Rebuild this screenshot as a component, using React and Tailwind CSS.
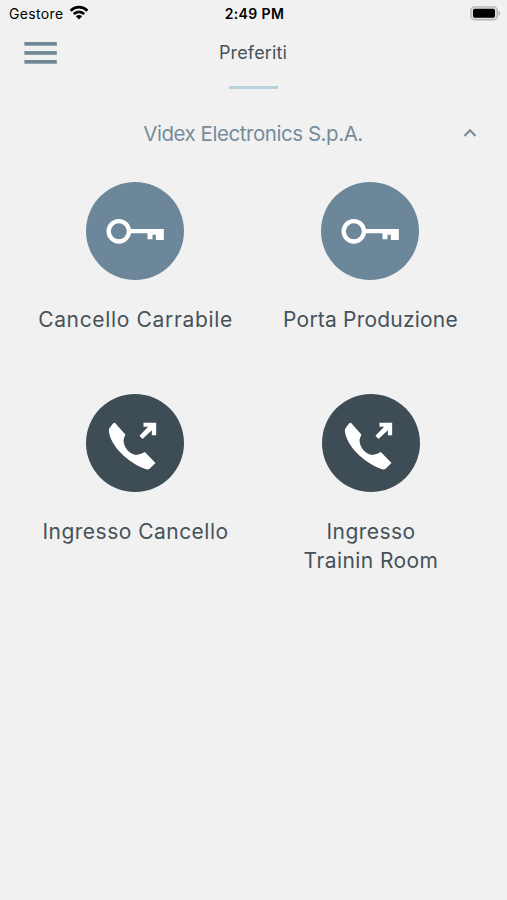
// src/App.jsx
// Favourites screen: status bar, header, system section and shortcut grid

import { useState } from "react";

const shortcuts = [
  { id: 1, type: "gate", label: "Cancello Carrabile", circle: "mr-px", text: "tracking-[0.66px]" },
  { id: 2, type: "gate", label: "Porta Produzione", circle: "mr-px", text: "tracking-[0.2px]" },
  { id: 3, type: "call", label: "Ingresso Cancello", circle: "mr-px", text: "tracking-[0.48px]" },
  { id: 4, type: "call", label: "Ingresso\nTrainin Room", circle: "", text: "pl-px tracking-[0.42px]" },
];

// ─── Icons ────────────────────────────────────────────────────────────────────
function WifiIcon() {
  return (
    <svg className="mb-[2px]" width="20" height="15" viewBox="0 0 20 15" fill="none" stroke="#000" strokeWidth="2.7">
      <path d="M1.6 5.7 C6.3 1 13.7 1 18.4 5.7" />
      <path d="M4.8 9 C7.8 6.1 12.2 6.1 15.2 9" />
      <path d="M10 14.4 L6.9 11.3 C8.7 9.7 11.3 9.7 13.1 11.3 Z" fill="#000" stroke="none" />
    </svg>
  );
}

function BatteryIcon() {
  return (
    <svg width="31" height="15" viewBox="0 0 31 15">
      <rect x="0.9" y="0.9" width="26.4" height="12.8" rx="3.8" fill="#dedede" stroke="#b5b5b5" strokeWidth="1.4" />
      <rect x="3" y="2.8" width="22" height="9" rx="1.8" fill="#000" />
      <path d="M28.4 5 C30.8 5.8 30.8 8.8 28.4 9.6 Z" fill="#b5b5b5" />
    </svg>
  );
}

function MenuIcon() {
  return (
    <svg width="33" height="22" viewBox="0 0 33 22" fill="#708796">
      <rect x="0.4" y="0" width="32.4" height="3.7" />
      <rect x="0.4" y="9.1" width="32.4" height="3.7" />
      <rect x="0.4" y="18" width="32.4" height="3.7" />
    </svg>
  );
}

function KeyIcon() {
  return (
    <svg className="size-full" viewBox="18.5 20 294 294" fill="#fff">
      <circle cx="117" cy="168" r="30.5" fill="none" stroke="#fff" strokeWidth="13" />
      <path d="M150 161 H252 V194 H228 V178 H218 V192 H203 V174 H150 Z" />
    </svg>
  );
}

function CallIcon() {
  return (
    <svg className="size-full" viewBox="18.5 19 294 294" fill="#fff">
      <path d="M99 108 Q104 103 108 108 L137 141 Q132 148 131 158 C132 180 148 199 168 202 Q182 201 195 193 L227 226 L209 243 Q204 247 197 244 C145 226 90 174 87 128 Q87 124 90 120 Z" />
      <path d="M191 105 H229 V143 H216 V128 L188 154 L179 144 L205 117 H191 Z" />
    </svg>
  );
}

// ─── Shortcut ─────────────────────────────────────────────────────────────────
function Shortcut({ item }) {
  const isGate = item.type === "gate";
  return (
    <button className="flex flex-col items-center">
      <span className={`size-[98px] rounded-full ${item.circle} ${isGate ? "bg-[#6b8799]" : "bg-[#3e4c56]"}`}>
        {isGate ? <KeyIcon /> : <CallIcon />}
      </span>
      <span className={`mt-[25px] whitespace-pre text-[21px] leading-[29px] ${item.text}`}>
        {item.label}
      </span>
    </button>
  );
}

// ─── Page ─────────────────────────────────────────────────────────────────────
export default function App() {
  const [open, setOpen] = useState(true);

  return (
    <div className="min-h-screen bg-[#f1f1f1] font-['Inter',sans-serif] text-[#46525a]">
      {/* Status bar */}
      <div className="grid h-[27px] grid-cols-[1fr_auto_1fr] items-center pl-[8px] pr-[6px] text-sm text-black">
        <div className="flex items-center gap-[5px]">
          <span className="pl-px tracking-[0.35px]">Gestore</span>
          <WifiIcon />
        </div>
        <span className="text-[14px] font-semibold tracking-[0.4px]">2:49 PM</span>
        <div className="flex justify-end">
          <BatteryIcon />
        </div>
      </div>

      {/* Header */}
      <header className="grid h-[51px] grid-cols-[1fr_auto_1fr] items-center pl-6 pr-6">
        <button className="flex" aria-label="Menu">
          <MenuIcon />
        </button>
        <h1 className="pr-px text-[18px] tracking-[0.15px]">Preferiti</h1>
      </header>
      <div className="mx-auto mt-2 h-[3px] w-[49px] bg-[#bbd0dd]" />

      {/* Section */}
      <button
        onClick={() => setOpen(!open)}
        className="mt-[29px] grid h-8 w-full grid-cols-[1fr_auto_1fr] items-center pl-[29px] pr-[30px] text-[#768c9b]"
      >
        <span />
        <span className="text-[20.5px] tracking-[-0.45px]">Videx Electronics S.p.A.</span>
        <svg
          className={`mb-[2px] justify-self-end ${open ? "" : "rotate-180"}`}
          width="14" height="10" viewBox="0 0 14 10"
          fill="none" stroke="currentColor" strokeWidth="2.2"
        >
          <path d="M1.5 8 L7 2.3 L12.5 8" />
        </svg>
      </button>

      {open && (
        <div className="mt-[32px] grid grid-cols-2 items-start gap-y-[60px] pl-[18px] pr-[19px]">
          {shortcuts.map((s) => (
            <Shortcut key={s.id} item={s} />
          ))}
        </div>
      )}
    </div>
  );
}
